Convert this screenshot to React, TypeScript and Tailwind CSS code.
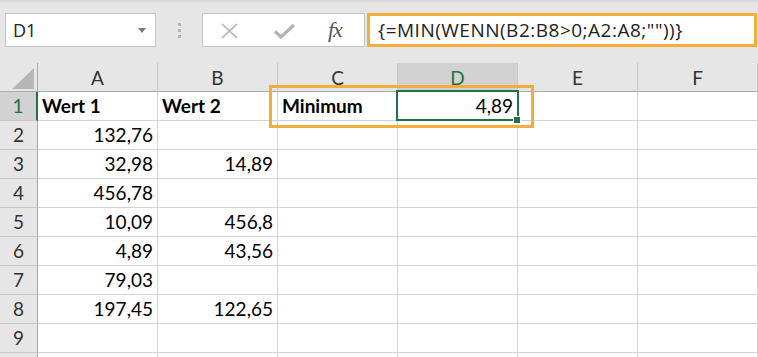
import { useState } from 'react';

const COLS = ['A', 'B', 'C', 'D', 'E', 'F'];

type Cell = { v: string; bold?: boolean; left?: boolean };

const ROWS: Record<number, Record<string, Cell>> = {
  1: {
    A: { v: 'Wert 1', bold: true, left: true },
    B: { v: 'Wert 2', bold: true, left: true },
    C: { v: 'Minimum', bold: true, left: true },
    D: { v: '4,89' },
  },
  2: { A: { v: '132,76' } },
  3: { A: { v: '32,98' }, B: { v: '14,89' } },
  4: { A: { v: '456,78' } },
  5: { A: { v: '10,09' }, B: { v: '456,8' } },
  6: { A: { v: '4,89' }, B: { v: '43,56' } },
  7: { A: { v: '79,03' } },
  8: { A: { v: '197,45' }, B: { v: '122,65' } },
  9: {},
  10: {},
};

function FormulaBar({ formula }: { formula: string }) {
  return (
    <div className="h-[63px] flex items-start pt-[13px] pl-[5px] bg-[linear-gradient(to_bottom,#d6d6d6_0px,#e6e6e6_4px,#e6e6e6_100%)]">
      {/* name box */}
      <div className="w-[151px] h-[34px] bg-white border border-[#c6c6c6] flex items-center justify-between pl-[7px] pr-[9px]">
        <span className="text-[18px] text-[#222] font-['Open_Sans',sans-serif]">D1</span>
        <svg width="8" height="5" viewBox="0 0 8 5">
          <path d="M0 0 L8 0 L4 5 Z" fill="#7a7a7a" />
        </svg>
      </div>
      <div className="w-[46px] h-[34px] flex flex-col items-center justify-center gap-[3px]">
        <span className="w-[3px] h-[3px] bg-[#b4b4b4]" />
        <span className="w-[3px] h-[3px] bg-[#b4b4b4]" />
        <span className="w-[3px] h-[3px] bg-[#b4b4b4]" />
      </div>
      {/* cancel / enter / fx */}
      <div className="w-[163px] h-[34px] bg-white border border-[#c6c6c6] flex items-center pl-[17px]">
        <svg width="19" height="16" viewBox="0 0 19 16" className="mt-[1px]">
          <path d="M2 1 L17 15 M17 1 L2 15" stroke="#b3b3b3" strokeWidth="1.6" fill="none" />
        </svg>
        <svg width="21" height="16" viewBox="0 0 21 16" className="ml-[35px] mt-[1px]">
          <path d="M1 8.5 L7 14 L20 2" stroke="#b3b3b3" strokeWidth="3.2" fill="none" />
        </svg>
        <span className="ml-[33px] text-[22px] italic text-[#555] font-['Liberation_Serif',serif] leading-none tracking-[-1px]">
          fx
        </span>
      </div>
      <div className="ml-[2px] w-[390px] h-[34px] bg-white border-[3px] border-[#f2ad3a] flex items-center pl-[8px]">
        <span className="text-[19px] tracking-[0.5px] text-[#222] font-['Open_Sans',sans-serif] whitespace-nowrap">
          {formula}
        </span>
      </div>
    </div>
  );
}

export default function App() {
  const [formula] = useState('{=MIN(WENN(B2:B8>0;A2:A8;""))}');

  return (
    <div className="w-[758px] h-[357px] overflow-hidden bg-white font-['Lato',sans-serif]">
      <FormulaBar formula={formula} />
      <div className="relative grid grid-cols-[38px_repeat(6,120px)] bg-white">
        {/* header row */}
        <div className="h-[29px] bg-[#e6e6e6] border-b border-r border-[#ababab] flex items-end justify-end pr-[3px] pb-[2px]">
          <svg width="22" height="21" viewBox="0 0 22 21">
            <path d="M22 0 L22 21 L0 21 Z" fill="#b6b6b6" />
          </svg>
        </div>
        {COLS.map((c) => (
          <div
            key={c}
            className={`h-[29px] border-b border-r border-b-[#ababab] border-r-[#c8c8c8] flex items-center justify-center pt-[2px] text-[19px] ${
              c === 'D' ? 'bg-[#d2d2d2] text-[#217346]' : 'bg-[#e6e6e6] text-[#333]'
            }`}
          >
            {c}
          </div>
        ))}

        {Object.keys(ROWS).map((k) => {
          const r = Number(k);
          const row = ROWS[r];
          return [
            <div
              key={`h${r}`}
              className={`h-[29px] border-b border-b-[#c8c8c8] flex items-center justify-center text-[19px] ${
                r === 1
                  ? 'bg-[#d2d2d2] text-[#217346] border-r-2 border-r-[#217346]'
                  : 'bg-[#e6e6e6] text-[#333] border-r border-r-[#ababab]'
              }`}
            >
              {r < 10 ? r : ''}
            </div>,
            ...COLS.map((c) => {
              const cell = row[c];
              return (
                <div
                  key={`${c}${r}`}
                  className={`h-[29px] border-b border-r border-[#d4d4d4] flex items-center px-[4px] text-[19px] text-black whitespace-nowrap ${
                    cell?.left ? 'justify-start' : 'justify-end'
                  } ${cell?.bold ? 'font-bold' : ''}`}
                >
                  {cell?.v}
                </div>
              );
            }),
          ];
        })}

        {/* active cell D1 */}
        <div className="absolute left-[396px] top-[27px] w-[123px] h-[31px] border-2 border-[#217346] pointer-events-none" />
        <div className="absolute left-[513px] top-[53px] w-[8px] h-[8px] bg-[#217346] border border-white pointer-events-none" />
        {/* highlight box around C1:D1 */}
        <div className="absolute left-[269px] top-[22px] w-[265px] h-[43px] border-[3px] border-[#f2ad3a] pointer-events-none" />
      </div>
    </div>
  );
}
